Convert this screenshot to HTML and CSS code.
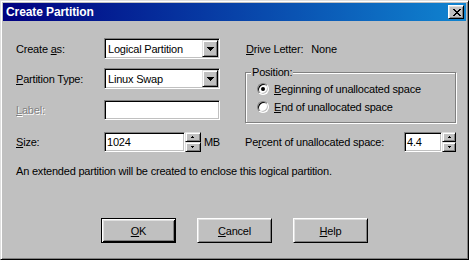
FILE: index.html
```html
<!DOCTYPE html>
<html>
<head>
<meta charset="utf-8">
<title>Create Partition</title>
<link rel="stylesheet" href="styles.css">
</head>
<body>
<div class="window">
  <div class="titlebar">
    <span class="title">Create Partition</span>
    <button class="close-btn" aria-label="Close">
      <svg width="8" height="7" viewBox="0 0 8 7"><path d="M0 0h2v1h-2zM6 0h2v1h-2zM1 1h2v1h-2zM5 1h2v1h-2zM2 2h4v1h-4zM3 3h2v1h-2zM2 4h4v1h-4zM1 5h2v1h-2zM5 5h2v1h-2zM0 6h2v1h-2zM6 6h2v1h-2z" fill="#000"/></svg>
    </button>
  </div>
  <div class="client">
    <div class="form">
      <div class="lbl row1"><span>Create <u>a</u>s:</span></div>
      <div class="combo row1">
        <span class="combo-text">Logical Partition</span>
        <span class="drop-btn"><svg width="7" height="4" viewBox="0 0 7 4"><path d="M0 0h7v1h-7zM1 1h5v1h-5zM2 2h3v1h-3zM3 3h1v1h-1z" fill="#000"/></svg></span>
      </div>
      <div class="drive row1"><span><u>D</u>rive Letter:</span><span class="drive-val">None</span></div>

      <div class="lbl row2"><span><u>P</u>artition Type:</span></div>
      <div class="combo row2">
        <span class="combo-text">Linux Swap</span>
        <span class="drop-btn"><svg width="7" height="4" viewBox="0 0 7 4"><path d="M0 0h7v1h-7zM1 1h5v1h-5zM2 2h3v1h-3zM3 3h1v1h-1z" fill="#000"/></svg></span>
      </div>
      <div class="group">
        <span class="legend">Position:</span>
        <div class="radio-row"><span class="radio checked"></span><span><u>B</u>eginning of unallocated space</span></div>
        <div class="radio-row"><span class="radio"></span><span><u>E</u>nd of unallocated space</span></div>
      </div>

      <div class="lbl short row3 disabled"><span><u>L</u>abel:</span></div>
      <div class="edit label-edit row3"></div>

      <div class="lbl short row4"><span><u>S</u>ize:</span></div>
      <div class="size-ctl row4">
        <div class="edit size-edit">1024</div>
        <div class="spin">
          <span class="spin-btn"><svg width="3" height="2" viewBox="0 0 3 2"><path d="M1 0h1v1h-1zM0 1h3v1h-3z" fill="#000"/></svg></span>
          <span class="spin-btn"><svg width="3" height="2" viewBox="0 0 3 2"><path d="M0 0h3v1h-3zM1 1h1v1h-1z" fill="#000"/></svg></span>
        </div>
        <span class="unit">MB</span>
      </div>
      <div class="percent row4">
        <span>Pe<u>r</u>cent of unallocated space:</span>
        <div class="pct-ctl">
          <div class="edit pct-edit">4.4</div>
          <div class="spin narrow">
            <span class="spin-btn"><svg width="3" height="2" viewBox="0 0 3 2"><path d="M1 0h1v1h-1zM0 1h3v1h-3z" fill="#000"/></svg></span>
            <span class="spin-btn"><svg width="3" height="2" viewBox="0 0 3 2"><path d="M0 0h3v1h-3zM1 1h1v1h-1z" fill="#000"/></svg></span>
          </div>
        </div>
      </div>
    </div>
    <p class="note">An extended partition will be created to enclose this logical partition.</p>
    <div class="buttons">
      <button class="btn default"><u>O</u>K</button>
      <button class="btn"><u>C</u>ancel</button>
      <button class="btn"><u>H</u>elp</button>
    </div>
  </div>
</div>
</body>
</html>
```
FILE: styles.css
```css
html, body {
  margin: 0;
  padding: 0;
  background: #c0c0c0;
}
body {
  font-family: "Liberation Sans", Arial, sans-serif;
  font-size: 11px;
  letter-spacing: -0.2px;
  color: #000;
}
u { text-underline-offset: 1px; }

.window {
  width: 469px;
  height: 260px;
  box-sizing: border-box;
  background: #c0c0c0;
  border: 1px solid;
  border-color: #dfdfdf #000 #000 #dfdfdf;
  box-shadow: inset 1px 1px 0 #fff, inset -1px -1px 0 #808080;
  padding: 2px;
  display: flex;
  flex-direction: column;
}

.titlebar {
  height: 18px;
  flex: none;
  background: linear-gradient(to right, #000080, #1084d0);
  display: flex;
  align-items: center;
  justify-content: space-between;
  padding: 0 2px 0 3px;
}
.title {
  color: #fff;
  font-weight: bold;
  font-size: 12px;
  letter-spacing: -0.1px;
  line-height: 14px;
}
.close-btn {
  width: 16px;
  height: 14px;
  box-sizing: border-box;
  padding: 0 0 0 1px;
  margin: 0;
  background: #c0c0c0;
  border: 1px solid;
  border-color: #fff #000 #000 #fff;
  box-shadow: inset 1px 1px 0 #dfdfdf, inset -1px -1px 0 #808080;
  display: flex;
  align-items: center;
  justify-content: center;
}
.close-btn svg { display: block; }

.client {
  flex: 1;
  padding: 17px 0 0 13px;
  display: flex;
  flex-direction: column;
}

.form {
  display: grid;
  grid-template-columns: 88px 116px 25px 211px;
  grid-template-rows: 30px 32px 32px 20px;
  align-items: start;
}
.row1 { grid-row: 1; }
.row2 { grid-row: 2; }
.row3 { grid-row: 3; }
.row4 { grid-row: 4; }

.lbl {
  grid-column: 1;
  height: 21px;
  display: flex;
  align-items: center;
}
.lbl.short { height: 20px; }
.disabled {
  color: #808080;
  text-shadow: 1px 1px 0 #fff;
}

.combo {
  grid-column: 2;
  height: 21px;
  box-sizing: border-box;
  background: #fff;
  border: 1px solid;
  border-color: #808080 #fff #fff #808080;
  box-shadow: inset 1px 1px 0 #000, inset -1px -1px 0 #c0c0c0;
  padding: 1px 1px 1px 3px;
  display: flex;
  align-items: center;
}
.combo-text { flex: 1; }
.drop-btn {
  width: 16px;
  height: 17px;
  box-sizing: border-box;
  background: #c0c0c0;
  border: 1px solid;
  border-color: #dfdfdf #000 #000 #dfdfdf;
  box-shadow: inset 1px 1px 0 #fff, inset -1px -1px 0 #808080;
  display: flex;
  align-items: center;
  justify-content: center;
}
.drop-btn svg, .spin-btn svg { display: block; }

.edit {
  height: 20px;
  box-sizing: border-box;
  background: #fff;
  border: 1px solid;
  border-color: #808080 #fff #fff #808080;
  box-shadow: inset 1px 1px 0 #000, inset -1px -1px 0 #c0c0c0;
  padding: 0 2px;
  display: flex;
  align-items: center;
}
.label-edit { grid-column: 2; }

.size-ctl {
  grid-column: 2;
  display: flex;
  align-items: center;
}
.size-edit { width: 82px; }
.spin {
  width: 16px;
  height: 20px;
  display: flex;
  flex-direction: column;
}
.spin.narrow { width: 14px; }
.spin-btn {
  flex: 1;
  box-sizing: border-box;
  background: #c0c0c0;
  border: 1px solid;
  border-color: #dfdfdf #000 #000 #dfdfdf;
  box-shadow: inset 1px 1px 0 #fff, inset -1px -1px 0 #808080;
  display: flex;
  align-items: center;
  justify-content: center;
}
.unit { margin-left: 3px; }

.drive {
  grid-column: 4;
  height: 21px;
  padding-left: 1px;
  display: flex;
  align-items: center;
}
.drive-val { margin-left: 8px; }

.group {
  grid-column: 4;
  grid-row: 2 / 4;
  margin-top: 4px;
  height: 51px;
  box-sizing: border-box;
  border: 1px solid #808080;
  box-shadow: inset 1px 1px 0 #fff, 1px 1px 0 #fff;
  position: relative;
  padding: 8px 0 0 11px;
  display: flex;
  flex-direction: column;
  gap: 2px;
}
.legend {
  position: absolute;
  top: -7px;
  left: 5px;
  padding: 0 1px;
  line-height: 13px;
  background: #c0c0c0;
}
.radio-row {
  height: 16px;
  display: flex;
  align-items: center;
  gap: 5px;
}
.radio {
  width: 12px;
  height: 12px;
  box-sizing: border-box;
  border-radius: 50%;
  background: #fff;
  border: 1px solid;
  border-color: #808080 #fff #fff #808080;
  box-shadow: inset 1px 1px 0 #000, inset -1px -1px 0 #c0c0c0;
  display: flex;
  align-items: center;
  justify-content: center;
}
.radio.checked::after {
  content: "";
  width: 4px;
  height: 4px;
  border-radius: 50%;
  background: #000;
}

.percent {
  grid-column: 4;
  height: 20px;
  display: flex;
  align-items: center;
  justify-content: space-between;
}
.pct-ctl { display: flex; }
.pct-edit { width: 38px; }

.note {
  margin: 13px 0 0 0;
  line-height: 13px;
}

.buttons {
  margin: 40px 13px 0 0;
  display: flex;
  justify-content: center;
  gap: 21px;
}
.btn {
  width: 75px;
  height: 25px;
  box-sizing: border-box;
  margin: 0;
  padding: 0;
  font: inherit;
  letter-spacing: inherit;
  color: #000;
  background: #c0c0c0;
  border: 1px solid;
  border-color: #fff #000 #000 #fff;
  box-shadow: inset 1px 1px 0 #dfdfdf, inset -1px -1px 0 #808080;
}
.btn.default {
  border-color: #000;
  box-shadow: inset 1px 1px 0 #fff, inset -1px -1px 0 #000, inset 2px 2px 0 #dfdfdf, inset -2px -2px 0 #808080;
}
```
